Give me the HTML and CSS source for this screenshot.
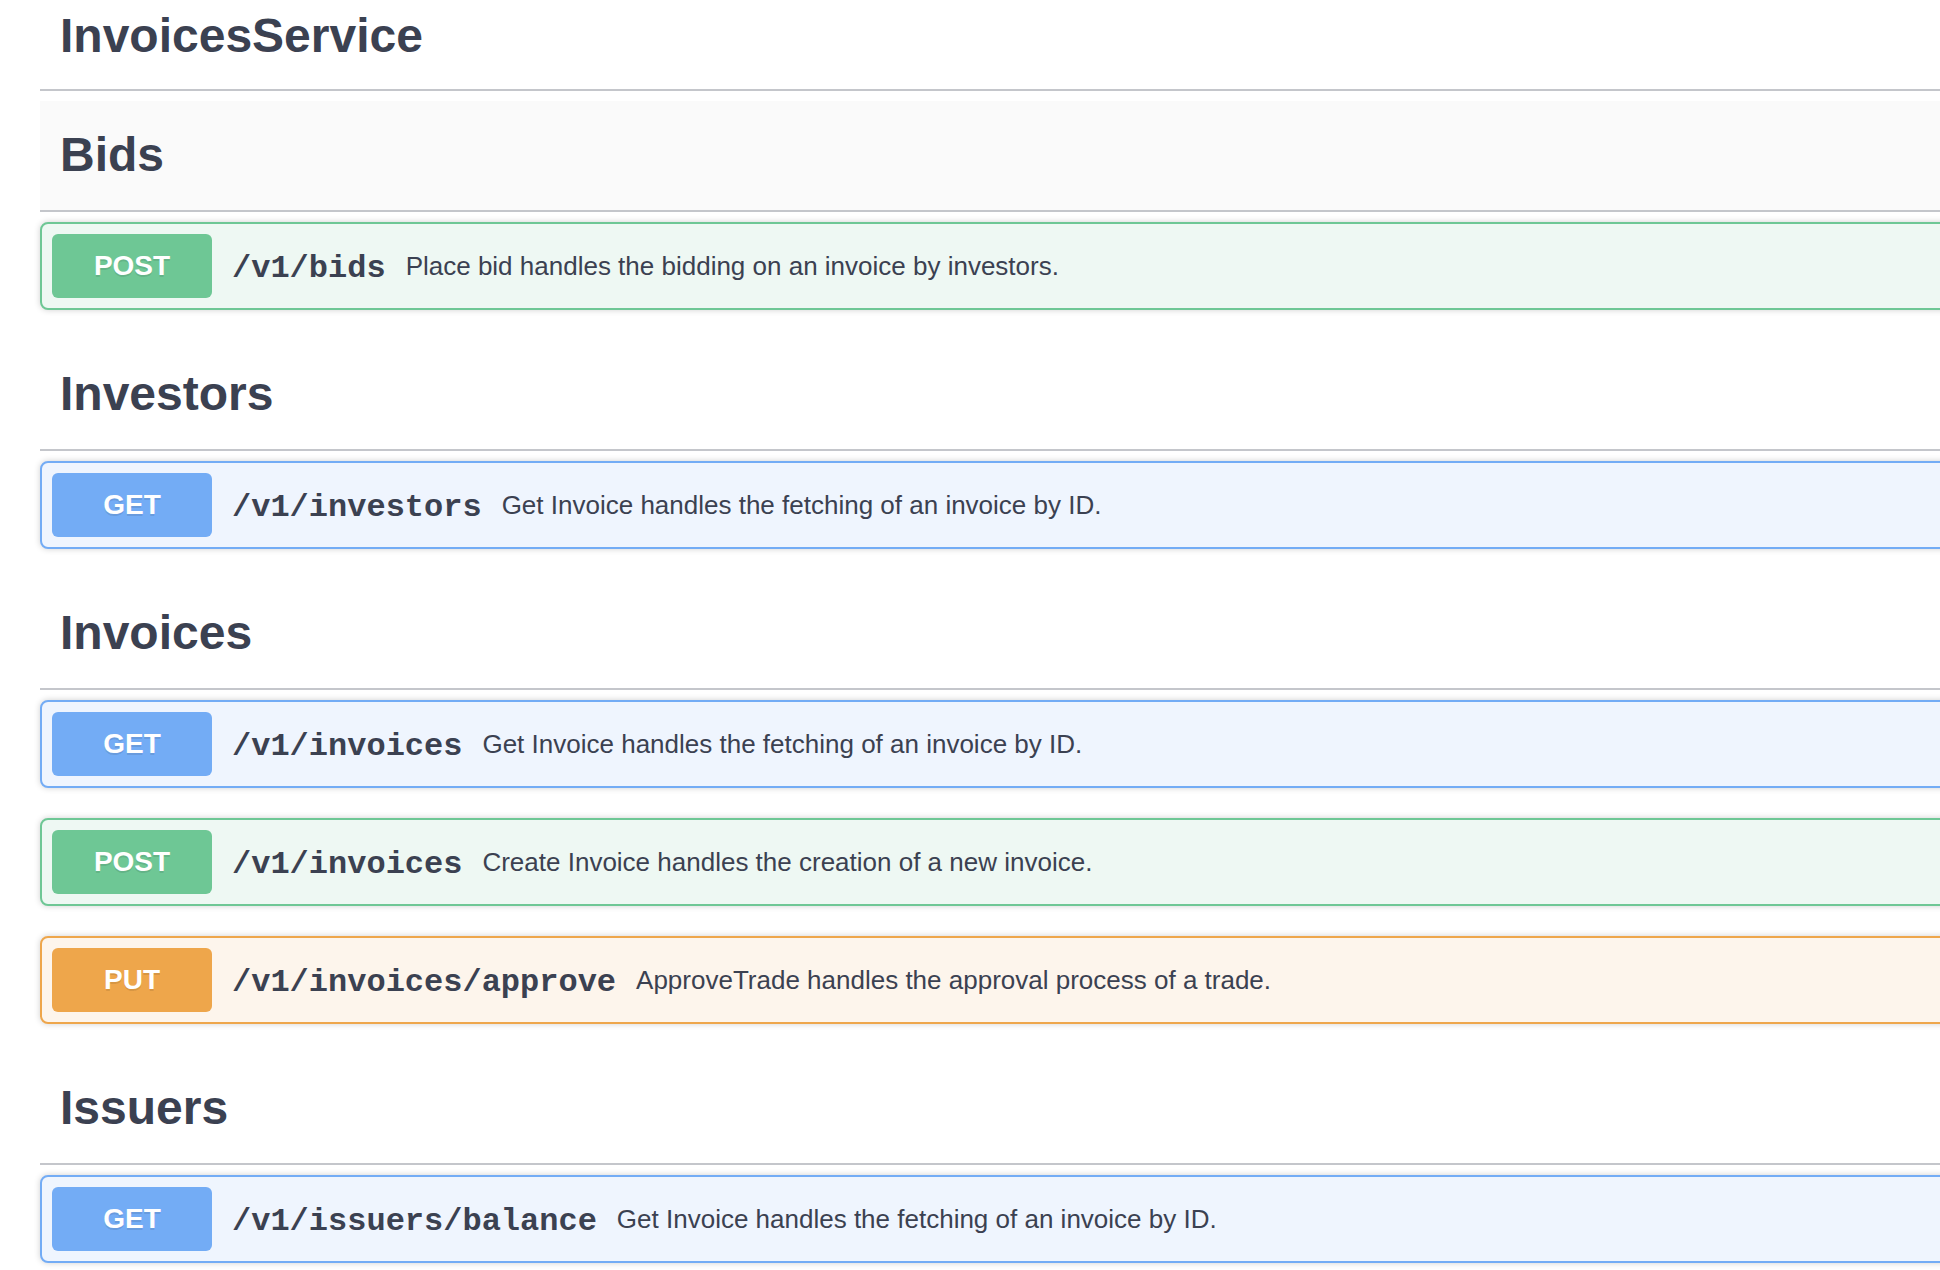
FILE: index.html
```html
<!DOCTYPE html>
<html lang="en">
<head>
<meta charset="utf-8">
<title>InvoicesService</title>
<link rel="stylesheet" href="styles.css">
</head>
<body>
<div class="page">
  <header class="service">
    <h1 class="service-title">InvoicesService</h1>
  </header>

  <section class="tag">
    <div class="tag-head is-hover"><h3 class="tag-name">Bids</h3></div>
    <div class="op op-post">
      <span class="op-method">POST</span>
      <span class="op-path">/v1/bids</span>
      <span class="op-desc">Place bid handles the bidding on an invoice by investors.</span>
    </div>
  </section>

  <section class="tag">
    <div class="tag-head"><h3 class="tag-name">Investors</h3></div>
    <div class="op op-get">
      <span class="op-method">GET</span>
      <span class="op-path">/v1/investors</span>
      <span class="op-desc">Get Invoice handles the fetching of an invoice by ID.</span>
    </div>
  </section>

  <section class="tag">
    <div class="tag-head"><h3 class="tag-name">Invoices</h3></div>
    <div class="op op-get">
      <span class="op-method">GET</span>
      <span class="op-path">/v1/invoices</span>
      <span class="op-desc">Get Invoice handles the fetching of an invoice by ID.</span>
    </div>
    <div class="op op-post">
      <span class="op-method">POST</span>
      <span class="op-path">/v1/invoices</span>
      <span class="op-desc">Create Invoice handles the creation of a new invoice.</span>
    </div>
    <div class="op op-put">
      <span class="op-method">PUT</span>
      <span class="op-path">/v1/invoices/approve</span>
      <span class="op-desc">ApproveTrade handles the approval process of a trade.</span>
    </div>
  </section>

  <section class="tag">
    <div class="tag-head"><h3 class="tag-name">Issuers</h3></div>
    <div class="op op-get">
      <span class="op-method">GET</span>
      <span class="op-path">/v1/issuers/balance</span>
      <span class="op-desc">Get Invoice handles the fetching of an invoice by ID.</span>
    </div>
  </section>
</div>
</body>
</html>
```

FILE: styles.css
```css
html, body {
  margin: 0;
  padding: 0;
  background: #ffffff;
  overflow: hidden;
}

body {
  font-family: "Liberation Sans", Arial, Helvetica, sans-serif;
  color: #3b4151;
}

.page {
  margin-left: 40px;
  width: 1960px;
}

.service {
  box-sizing: border-box;
  height: 91px;
  padding: 12px 0 0 20px;
  border-bottom: 2px solid #c4c6cb;
  margin-bottom: 10px;
}

.service-title,
.tag-name {
  margin: 0;
  font-size: 48px;
  line-height: 48px;
  font-weight: 700;
  color: #3b4151;
}

.tag-head {
  box-sizing: border-box;
  height: 111px;
  display: flex;
  align-items: center;
  padding: 0 0 2px 20px;
  border-bottom: 2px solid #c4c6cb;
  margin-bottom: 10px;
}

.tag-head.is-hover {
  background: #fafafa;
}

.op {
  box-sizing: border-box;
  height: 88px;
  display: flex;
  align-items: center;
  padding: 0 10px;
  border: 2px solid;
  border-radius: 8px;
  margin-bottom: 30px;
  box-shadow: 0 0 6px rgba(0, 0, 0, 0.19);
}

.op-method {
  flex: none;
  width: 160px;
  height: 64px;
  display: flex;
  align-items: center;
  justify-content: center;
  border-radius: 6px;
  color: #ffffff;
  font-size: 28px;
  font-weight: 700;
  text-shadow: 0 2px 0 rgba(0, 0, 0, 0.1);
}

.op-path {
  padding: 5px 20px 0;
  font-family: "Liberation Mono", "Courier New", monospace;
  font-size: 32px;
  font-weight: 700;
  color: #3b4151;
  white-space: nowrap;
}

.op-desc {
  font-size: 26px;
  color: #3b4151;
  white-space: nowrap;
}

.op-post {
  border-color: #6ec795;
  background: #eef8f3;
}
.op-post .op-method {
  background: #6ec795;
}

.op-get {
  border-color: #73acf5;
  background: #eff5fe;
}
.op-get .op-method {
  background: #73acf5;
}

.op-put {
  border-color: #eea64b;
  background: #fdf5ec;
}
.op-put .op-method {
  background: #eea64b;
}
```
